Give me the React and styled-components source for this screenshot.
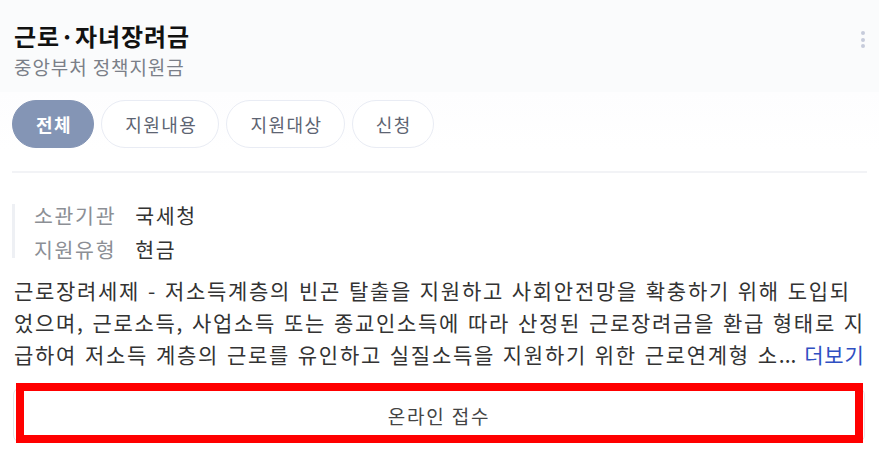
import styled, { createGlobalStyle } from 'styled-components';

const GlobalStyle = createGlobalStyle`
    html, body {
        margin: 0;
        padding: 0;
        background: #ffffff;
    }
    body {
        font-family: 'Noto Sans CJK KR', 'Noto Sans', sans-serif;
        color: #222;
    }
`;

const tabs = ['전체', '지원내용', '지원대상', '신청'];

const infos = [
    { label: '소관기관', value: '국세청' },
    { label: '지원유형', value: '현금' },
];

export default function App() {
    return (
        <>
            <GlobalStyle />
            <Card>
                <Header>
                    <TitleRow>
                        <div>
                            <Title>근로·자녀장려금</Title>
                            <SubTitle>중앙부처 정책지원금</SubTitle>
                        </div>
                        <MoreButton aria-label="더보기 메뉴">
                            <span />
                            <span />
                            <span />
                        </MoreButton>
                    </TitleRow>
                    <Tabs>
                        {tabs.map((tab, i) => (
                            <Tab key={tab} $active={i === 0}>
                                {tab}
                            </Tab>
                        ))}
                    </Tabs>
                </Header>
                <DivisionLine />
                <InfoList>
                    {infos.map((info) => (
                        <InfoRow key={info.label}>
                            <span>{info.label}</span>
                            <strong>{info.value}</strong>
                        </InfoRow>
                    ))}
                </InfoList>
                <Description>
                    근로장려세제 - 저소득계층의 빈곤 탈출을 지원하고 사회안전망을 확충하기 위해 도입되었으며, 근로소득, 사업소득 또는 종교인소득에 따라 산정된 근로장려금을 환급 형태로 지급하여 저소득 계층의 근로를 유인하고 실질소득을 지원하기 위한 근로연계형 소
                    <Ellipsis>...</Ellipsis> <MoreLink>더보기</MoreLink>
                </Description>
                <ApplyWrap>
                    <ApplyButton>온라인 접수</ApplyButton>
                    <Highlight />
                </ApplyWrap>
            </Card>
        </>
    );
}

const Card = styled.div`
    width: 879px;
    height: 459px;
    box-sizing: border-box;
    overflow: hidden;
    background: #ffffff;
`;

const Header = styled.div`
    padding: 20px 12px 23px 12px;
    background: linear-gradient(#fafbfc 0, #fafbfc 92px, #fdfdfe 92px, #ffffff 150px);
`;

const TitleRow = styled.div`
    display: flex;
    justify-content: space-between;
    align-items: flex-start;
    padding-left: 2px;
`;

const Title = styled.h1`
    margin: 0;
    font-size: 24px;
    line-height: 32px;
    font-weight: 700;
    color: #111;
    letter-spacing: 0.9px;
`;

const SubTitle = styled.p`
    margin: 2px 0 0 0;
    font-size: 19px;
    line-height: 26px;
    color: #7b7f88;
    letter-spacing: 0.9px;
`;

const MoreButton = styled.button`
    display: flex;
    flex-direction: column;
    align-items: center;
    gap: 2.6px;
    width: 8px;
    padding: 11px 0 0 0;
    border: none;
    background: none;

    span {
        width: 4px;
        height: 4px;
        border-radius: 50%;
        background: #c6cbdb;
    }
`;

const Tabs = styled.div`
    display: flex;
    gap: 7px;
    margin-top: 20px;
`;

const Tab = styled.button`
    height: 48px;
    padding: 0 21px 0 23px;
    border-radius: 24px;
    border: 1px solid ${(p) => (p.$active ? '#8495b5' : '#e9ecf4')};
    background: ${(p) => (p.$active ? '#8495b5' : '#ffffff')};
    color: ${(p) => (p.$active ? '#ffffff' : '#5d6472')};
    font-family: inherit;
    font-size: 18px;
    letter-spacing: 1.5px;
    font-weight: ${(p) => (p.$active ? 700 : 400)};
`;

const DivisionLine = styled.div`
    height: 2px;
    margin: 0 12px;
    background: #f2f3f6;
`;

const InfoList = styled.div`
    display: flex;
    flex-direction: column;
    gap: 11px;
    margin: 31px 12px 0 12px;
    padding-left: 19px;
    border-left: 3px solid #eef0f4;
    height: 54px;
`;

const InfoRow = styled.div`
    display: flex;
    gap: 19px;
    font-size: 20.5px;
    line-height: 23px;
    letter-spacing: 1.7px;

    span {
        color: #8c8f95;
    }

    strong {
        font-weight: 400;
        color: #333;
    }
`;

const Description = styled.p`
    margin: 16px 12px 0 14px;
    font-size: 21px;
    line-height: 32px;
    color: #333;
    letter-spacing: 1.7px;
    word-spacing: 1.5px;
`;

const Ellipsis = styled.span`
    letter-spacing: 0;
`;

const MoreLink = styled.span`
    color: #2f4fc2;
    letter-spacing: 0.8px;
    white-space: nowrap;
`;

const ApplyWrap = styled.div`
    position: relative;
    margin: 17px 14px 0 13px;
`;

const ApplyButton = styled.button`
    display: block;
    width: 100%;
    height: 56px;
    border: 1px solid #e4e5e8;
    border-radius: 8px;
    background: #ffffff;
    font-family: inherit;
    font-size: 19px;
    letter-spacing: 1.8px;
    color: #444;
`;

const Highlight = styled.div`
    position: absolute;
    top: -4px;
    bottom: 0;
    left: 3px;
    right: 2px;
    border: 8px solid #ff0000;
    pointer-events: none;
`;
